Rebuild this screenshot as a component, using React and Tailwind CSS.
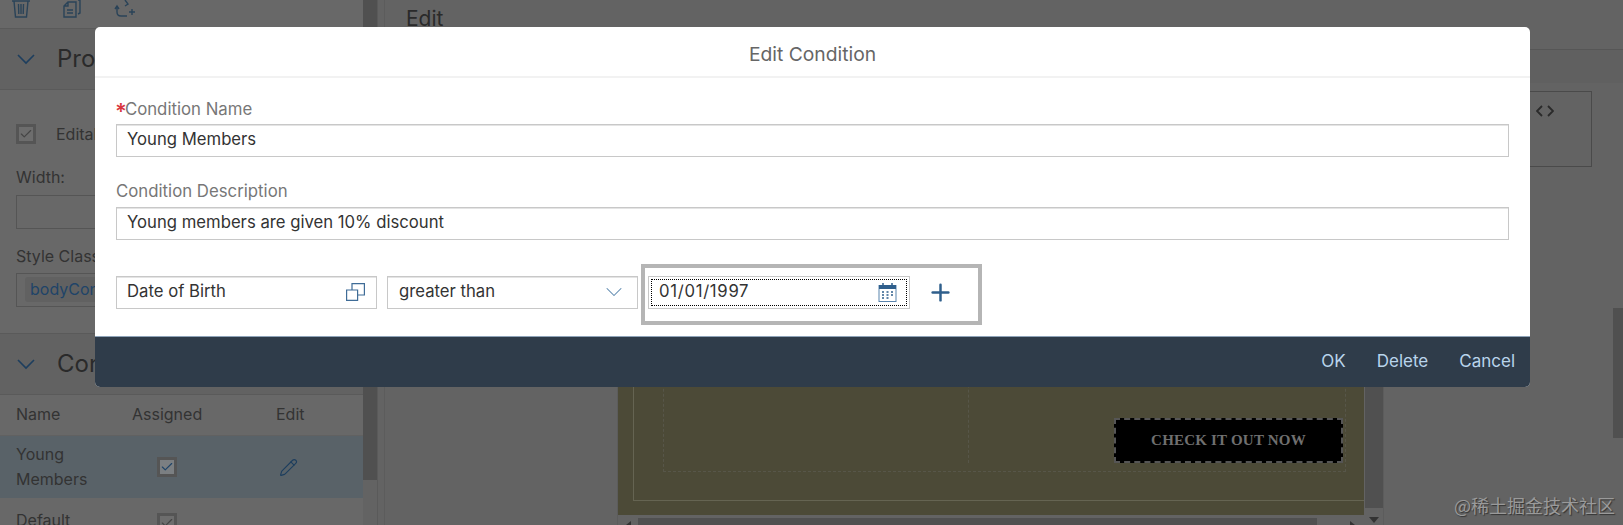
import React from "react";
import { ChevronDown, Check, Plus, Pencil } from "lucide-react";

function Box({ dim = false, row = false }) {
  return (
    <div className={"w-[20px] h-[20px] border-[3px] border-[#555] flex items-center justify-center " + (row ? "bg-[#7b7f82]" : "bg-[#6d6d6d]")}>
      <Check size={14} strokeWidth={2} className={dim ? "text-[#454545]" : "text-[#1f4468]"} />
    </div>
  );
}

function Section({ title }) {
  return (
    <div className="h-[62px] shrink-0 flex items-center gap-[22px] pl-[17px] border-y border-[#5a5a5a] bg-[#626262]">
      <svg width="18" height="11" viewBox="0 0 18 11" fill="none" stroke="#1d3e5e" strokeWidth="1.6">
        <path d="M1 1l8 8 8-8" />
      </svg>
      <span className="text-[24px] text-[#2a2a2a]">{title}</span>
    </div>
  );
}

function Toolbar() {
  return (
    <div className="h-[28px] shrink-0 flex items-start gap-[33px] pl-[12px] text-[#2a4358]">
      <svg width="18" height="18" viewBox="0 0 18 18" fill="none" stroke="currentColor" strokeWidth="1.4">
        <path d="M0 1h18M2 1l1.5 16h11L16 1M6.5 4l.3 10M9 4v10M11.5 4l-.3 10" />
      </svg>
      <svg width="18" height="18" viewBox="0 0 18 18" fill="none" stroke="currentColor" strokeWidth="1.4">
        <path d="M1 6l4-4h8v15H1zM5 2v4H1M15 0h2v13l-2 1M4 10h6M4 13h6" />
      </svg>
      <svg width="21" height="18" viewBox="0 0 21 18" fill="none" stroke="currentColor" strokeWidth="1.4">
        <path d="M11 0l3 4-3 2M1 9l2-3 2 3M3 6v6q0 4 4 4h6M15 12h6M18 9v6" />
      </svg>
    </div>
  );
}

function LeftPanel() {
  return (
    <div className="w-[378px] shrink-0 flex border-r border-[#5a5a5a]">
      <div className="w-[363px] shrink-0 flex flex-col bg-[#686868]">
        <Toolbar />
        <Section title="Properties" />
        <div className="h-[243px] shrink-0 pl-[16px] flex flex-col">
          <div className="flex items-center gap-[20px] mt-[33px] h-[22px]">
            <Box dim />
            <span className="text-[16px] text-[#333]">Editable</span>
          </div>
          <div className="mt-[21px] text-[16px] leading-[22px] text-[#333]">Width:</div>
          <div className="mt-[7px] h-[34px] w-[250px] border border-[#555]" />
          <div className="mt-[16px] text-[16px] leading-[22px] text-[#333]">Style Class</div>
          <div className="mt-[6px] h-[34px] w-[250px] border border-[#555] px-[8px] py-[3px]">
            <span className="inline-block h-[25px] px-[5px] rounded-[3px] bg-[#616161] text-[16px] leading-[24px] text-[#1f4468]">bodyContent</span>
          </div>
        </div>
        <Section title="Conditions" />
        <div className="h-[41px] shrink-0 flex items-center pb-[3px] text-[16px] text-[#333] border-b border-[#616161]">
          <span className="w-[132px] pl-[16px]">Name</span>
          <span className="w-[144px]">Assigned</span>
          <span>Edit</span>
        </div>
        <div className="h-[62px] shrink-0 flex items-center bg-[#596268] text-[16px] leading-[25px] text-[#333]">
          <span className="w-[157px] pl-[16px] pb-[1px]">Young<br />Members</span>
          <span className="w-[122px]"><Box row /></span>
          <Pencil size={19} strokeWidth={1.4} className="text-[#1d3e5e]" />
        </div>
        <div className="h-[40px] shrink-0 flex items-start text-[16px] text-[#333]">
          <span className="w-[157px] pl-[16px] pt-[10px]">Default</span>
          <span className="pt-[15px]"><Box dim /></span>
        </div>
      </div>
      <div className="flex-1 flex flex-col">
        <div className="h-[480px] shrink-0 bg-[#505050]" />
      </div>
    </div>
  );
}

function CenterPanel() {
  return (
    <div className="flex-1 flex flex-col ml-[6px] border-l border-[#5c5c5c]">
      <div className="h-[50px] shrink-0 border-b border-[#565656] pl-[21px] pt-[3px] text-[21px] leading-[32px] text-[#2a2a2a]">Edit</div>
      <div className="h-[33px] shrink-0 bg-[#606060]" />
      <div className="flex-1 flex min-h-0">
        <div className="w-[232px] shrink-0" />
        <div className="w-[767px] shrink-0 flex border-x border-[#5c5c5c]">
          <div className="w-[746px] shrink-0 flex flex-col">
            <div className="h-[432px] shrink-0 bg-[#4c4a37] pl-[15px] flex flex-col">
              <div className="h-[418px] shrink-0 border-l border-b border-[#656452] pl-[29px]">
                <div className="h-[389px] w-[683px] border border-dashed border-[#575649] border-t-0 flex pb-[8px] pr-[2px]">
                  <div className="w-[305px] border-r border-dashed border-[#575649]" />
                  <div className="flex-1 flex justify-end items-end">
                    <div className="h-[45px] w-[229px] bg-black border-2 border-dashed border-[#555] flex items-center justify-center text-[15px] font-bold tracking-[0.2px] text-[#6f6f6f]" style={{ fontFamily: '"Liberation Serif", serif' }}>
                      CHECK IT OUT NOW
                    </div>
                  </div>
                </div>
              </div>
            </div>
            <div className="h-[10px] shrink-0 mt-[3px] flex items-start">
              <div className="ml-[8px] mt-[3px] w-0 h-0 border-y-[4px] border-y-transparent border-r-[5px] border-r-[#333]" />
              <div className="ml-[7px] w-[679px] h-[8px] bg-[#505050]" />
              <div className="ml-[33px] mt-[3px] w-0 h-0 border-y-[4px] border-y-transparent border-l-[5px] border-l-[#333]" />
            </div>
          </div>
          <div className="w-[19px] shrink-0 flex flex-col">
            <div className="h-[425px] shrink-0 bg-[#505050] ml-[1px]" />
            <div className="mx-auto mt-[9px] w-0 h-0 border-x-[5px] border-x-transparent border-t-[6px] border-t-[#333]" />
          </div>
        </div>
        <div className="flex-1 flex">
          <div className="flex-1">
            <div className="mt-[8px] ml-[100px] mr-[21px] h-[76px] border border-[#4a4a4a] pl-[51px] pt-[13px]">
              <svg width="18" height="12" viewBox="0 0 18 12" fill="none" stroke="#2a2a2a" strokeWidth="1.8">
                <path d="M6 1L1 6l5 5M12 1l5 5-5 5" />
              </svg>
            </div>
          </div>
          <div className="w-[10px] pt-[225px]">
            <div className="h-[130px] bg-[#505050]" />
          </div>
        </div>
      </div>
    </div>
  );
}

function Field({ children, className = "" }) {
  return (
    <div className={"h-[33px] border border-[#c8c8c8] shadow-[inset_0_1px_0_#e4e4e4] flex items-center pl-[10px] pb-[1px] text-[16.7px] text-[#333] bg-white " + className}>
      {children}
    </div>
  );
}

function Dialog() {
  return (
    <div className="absolute left-[95px] top-[27px] w-[1435px] h-[360px] rounded-[5px] bg-white flex flex-col overflow-hidden">
      <div className="h-[51px] shrink-0 border-b-2 border-[#f2f2f2] flex items-center justify-center pt-[5px] text-[19.3px] text-[#666]">Edit Condition</div>
      <div className="flex-1 px-[21px] pt-[20px]">
        <div className="h-[26px] text-[16.8px] leading-[22px] text-[#777]"><span className="text-[#d9363e] text-[22px] leading-[16px] font-semibold align-[-4px] -ml-[1px] mr-[-2px]">*</span>Condition Name</div>
        <Field>Young Members</Field>
        <div className="mt-[21px] h-[29px] text-[16.8px] leading-[26px] text-[#777]">Condition Description</div>
        <Field>Young members are given 10% discount</Field>
        <div className="relative mt-[36px] flex gap-[10px]">
          <Field className="w-[261px] justify-between pr-[11px]">
            Date of Birth
            <svg width="19" height="18" viewBox="0 0 19 18" fill="none" stroke="#3f6c97" strokeWidth="1.2">
              <path d="M.6 7h11v10.4H.6zM6 7V.6h12.4V12H12" />
            </svg>
          </Field>
          <Field className="w-[251px] justify-between pr-[13px]">
            <span className="pl-[1px]">greater than</span>
            <ChevronDown size={28} strokeWidth={0.9} className="text-[#5a86ad] -mr-[4px]" />
          </Field>
          <div className="absolute left-[525px] -top-[12px] w-[341px] h-[61px] border-4 border-[#b5b5b5] flex items-start pl-[3px] pt-[8px]">
            <div className="w-[262px] h-[33px] border border-[#c8c8c8] p-[2px] bg-white">
              <div className="w-full h-full border border-dotted border-black flex items-center justify-between pl-[7px] pr-[9px] pb-[1px] text-[16.7px] text-[#333]">
                <span className="tracking-[0.7px]">01/01/1997</span>
                <svg width="19" height="19" viewBox="0 0 19 19" fill="none" className="mt-[1px]">
                  <rect x="1" y="2.5" width="17" height="16" stroke="#5b85ad" />
                  <rect x="1" y="2" width="17" height="4" fill="#2f5f8c" />
                  <path d="M5 0v3M14 0v3" stroke="#2f5f8c" strokeWidth="1.5" />
                  <path d="M4 9h2M8.5 9h2M13 9h2M4 12h2M8.5 12h2M13 12h2M4 15h2M8.5 15h2" stroke="#2f5f8c" strokeWidth="1.4" />
                </svg>
              </div>
            </div>
            <Plus size={27} strokeWidth={2.2} className="text-[#2f5f8c] ml-[17px] mt-[3px]" />
          </div>
        </div>
      </div>
      <div className="h-[51px] shrink-0 bg-[#2f3c4a] border-t border-[#8ea3b8] flex items-center justify-end gap-[31px] pr-[15px] pb-[1px] text-[17px] text-[#b9d4ec]">
        <span>OK</span>
        <span>Delete</span>
        <span>Cancel</span>
      </div>
    </div>
  );
}

export default function App() {
  return (
    <div className="relative w-[1623px] h-[525px] overflow-hidden flex bg-[#636363]" style={{ fontFamily: 'Inter, sans-serif' }}>
      <LeftPanel />
      <CenterPanel />
      <Dialog />
      <div className="absolute right-[8px] bottom-[6px] text-[18px] text-[#9a9a9a] [text-shadow:1px_1px_1px_#333]" style={{ fontFamily: '"Noto Sans CJK SC", sans-serif' }}>@稀土掘金技术社区</div>
    </div>
  );
}
